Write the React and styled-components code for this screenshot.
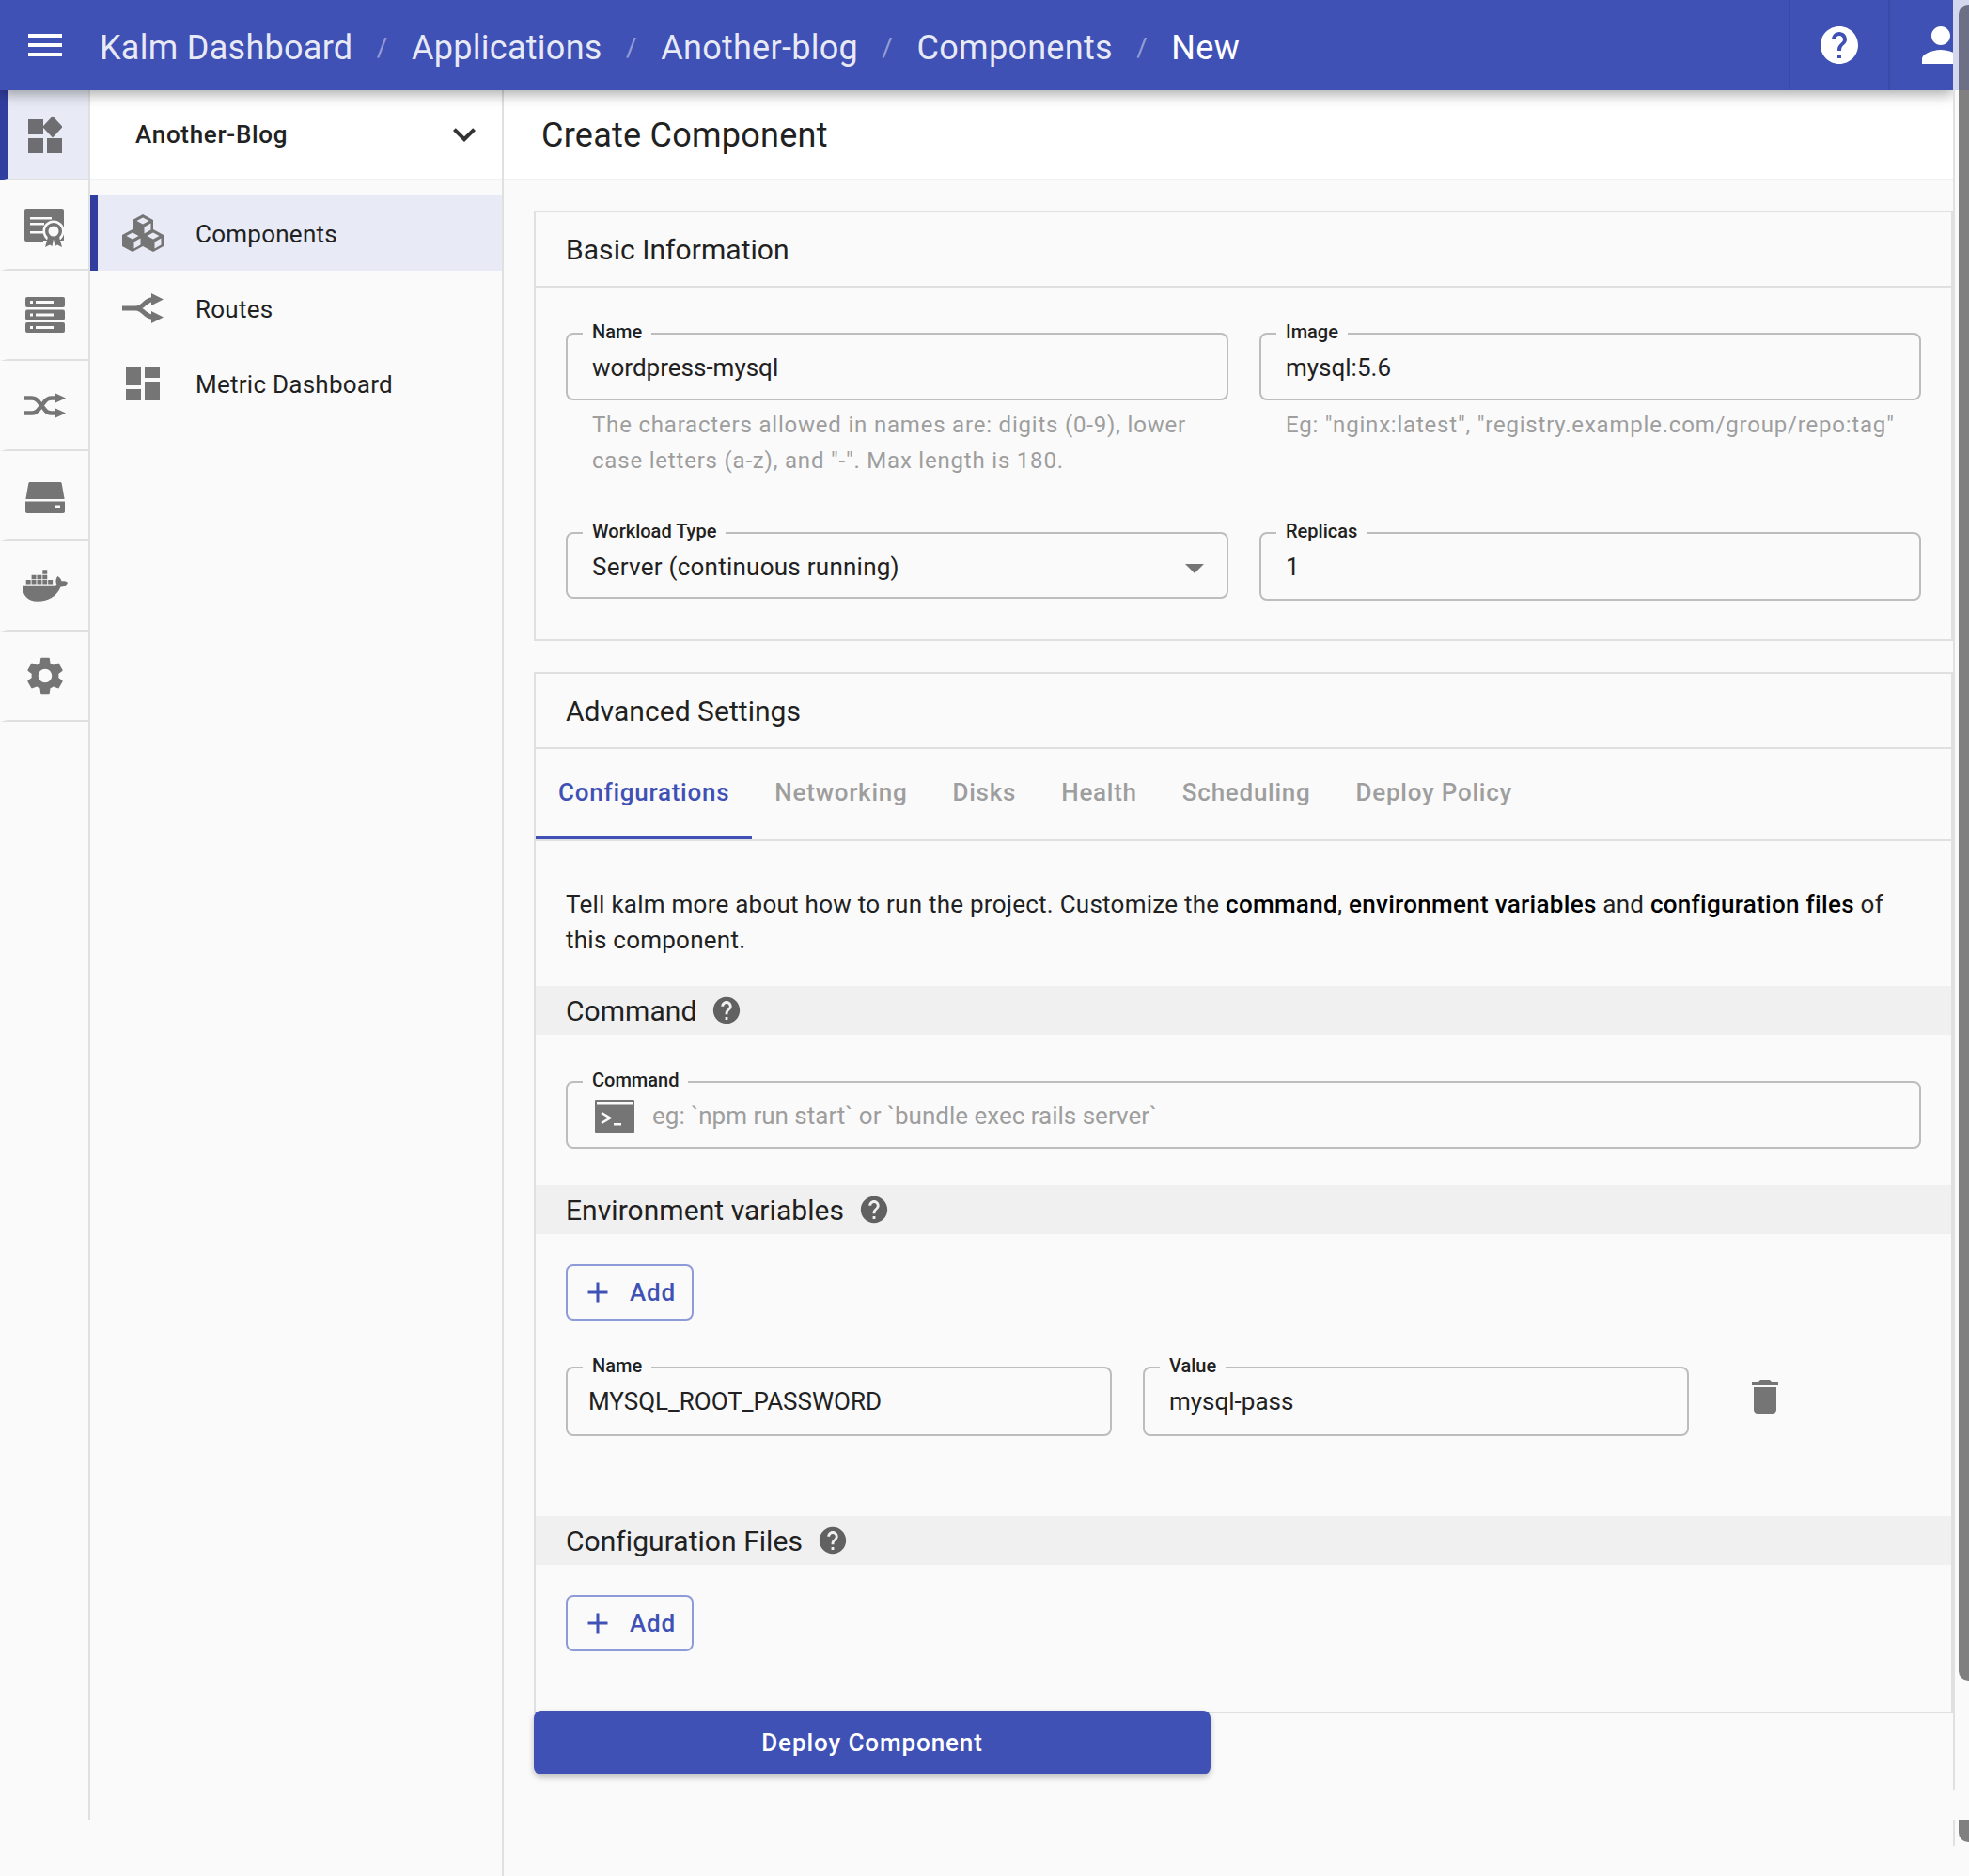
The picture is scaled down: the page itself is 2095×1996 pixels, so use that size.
import React from 'react';
import styled, { createGlobalStyle } from 'styled-components';
import { FaDocker } from 'react-icons/fa';
import { MdAdd, MdArrowDropDown, MdDashboard, MdDelete, MdHelp, MdKeyboardArrowDown, MdMenu, MdPerson, MdSettings } from 'react-icons/md';

const GlobalStyle = createGlobalStyle`
  html, body {
    margin: 0;
    background: #fafafa;
    overflow: hidden;
  }
  * {
    box-sizing: border-box;
  }
  body {
    font-family: Roboto, 'Liberation Sans', sans-serif;
    color: #212121;
  }
`;

const Page = styled.div`
  position: relative;
  width: 2095px;
  height: 1996px;
  padding-right: 17px;
  overflow: hidden;
`;

const TopBar = styled.header`
  position: relative;
  z-index: 2;
  display: flex;
  align-items: center;
  height: 96px;
  background: #4051b5;
  box-shadow: 0 4px 14px rgba(0, 0, 0, 0.35);
  overflow: hidden;
`;

const MenuSlot = styled.div`
  display: flex;
  align-items: center;
  justify-content: center;
  width: 96px;
  margin-right: 10px;
  color: #fff;
`;

const Crumbs = styled.nav`
  display: flex;
  align-items: center;
  flex: 1;
  padding-top: 5px;
  font-size: 36px;
  letter-spacing: 0.28px;
  color: rgba(255, 255, 255, 0.88);
`;

const Crumb = styled.span`
  color: ${({ $current }) => ($current ? '#fff' : 'inherit')};
`;

const CrumbSlash = styled.span`
  width: 62.5px;
  text-align: center;
  font-size: 28px;
  color: rgba(255, 255, 255, 0.45);
`;

const BarCell = styled.div`
  display: flex;
  align-items: center;
  justify-content: center;
  flex: none;
  width: 106px;
  height: 96px;
  border-left: 2px solid #3a4aa8;
  color: #fff;
`;

const PersonCell = styled(BarCell)`
  margin-right: -37px;
  padding-left: 4px;
`;

const Body = styled.div`
  display: flex;
  align-items: flex-start;
  height: 1900px;
`;

const Rail = styled.aside`
  flex: none;
  width: 96px;
  height: 1840px;
  border-right: 2px solid #e0e0e0;
`;

const RailItem = styled.div`
  display: flex;
  align-items: center;
  justify-content: center;
  height: 96px;
  padding-right: 6px;
  border-left: 8px solid ${({ $active }) => ($active ? '#303f9f' : 'transparent')};
  border-bottom: 2px solid #e0e0e0;
  background: ${({ $active }) => ($active ? '#e8eaf6' : 'transparent')};
  color: #757575;
`;

const SubNav = styled.aside`
  flex: none;
  width: 440px;
  height: 100%;
  border-right: 2px solid #e0e0e0;
`;

const SubNavHead = styled.div`
  display: flex;
  align-items: center;
  justify-content: space-between;
  height: 96px;
  padding: 0 16px 0 48px;
  background: #fff;
  border-bottom: 2px solid #f0f0f0;
  font-size: 26px;
  font-weight: 500;
  letter-spacing: 0.7px;
  color: #212121;
`;

const SubNavList = styled.div`
  padding-top: 16px;
`;

const SubNavItem = styled.div`
  display: flex;
  align-items: center;
  gap: 32px;
  height: 80px;
  padding-left: 24px;
  border-left: 8px solid ${({ $active }) => ($active ? '#303f9f' : 'transparent')};
  background: ${({ $active }) => ($active ? '#e8eaf6' : 'transparent')};
  font-size: 26px;
  letter-spacing: 0.25px;
`;

const SubNavIcon = styled.span`
  display: flex;
  align-items: center;
  justify-content: center;
  width: 48px;
  height: 48px;
  color: #757575;
`;

const SubNavLabel = styled.span`
  padding-top: 2px;
`;

const Main = styled.main`
  flex: 1;
  min-width: 0;
`;

const MainHead = styled.div`
  display: flex;
  align-items: center;
  height: 96px;
  padding: 2px 0 0 40px;
  background: #fff;
  border-bottom: 2px solid #f0f0f0;
  font-size: 36px;
  letter-spacing: 0.25px;
`;

const Content = styled.div`
  padding: 32px 0 0 32px;
`;

const Card = styled.section`
  margin-bottom: 33px;
  border: 2px solid #e0e0e0;
  background: #fafafa;
`;

const AdvancedCard = styled(Card)`
  margin-bottom: 0;
  padding-bottom: 64px;
`;

const CardHead = styled.div`
  display: flex;
  align-items: center;
  height: 80px;
  padding-left: 32px;
  border-bottom: 2px solid #e0e0e0;
  font-size: 30px;
  letter-spacing: 0.05px;
`;

const FieldGrid = styled.div`
  display: grid;
  grid-template-columns: 705px 704px;
  column-gap: 33px;
  row-gap: 46px;
  align-items: start;
  padding: 37px 32px 41px;
`;

const Field = styled.fieldset`
  display: block;
  height: ${({ $h }) => $h || 85}px;
  min-width: 0;
  margin: -2px 0 0;
  padding: 0;
  border: 2px solid #bdbdbd;
  border-radius: 8px;
`;

const FieldLabel = styled.legend`
  margin-left: 16px;
  padding: 0 10px 4px;
  font-size: 20px;
  font-weight: 500;
  line-height: 24px;
  color: #212121;
`;

const FieldBody = styled.div`
  display: flex;
  align-items: center;
  height: 50px;
  padding: 0 ${({ $right }) => $right || 26}px 5px ${({ $left }) => $left || 26}px;
`;

const FieldValue = styled.span`
  flex: 1;
  font-size: 26px;
  line-height: 43px;
  letter-spacing: ${({ $spaced }) => ($spaced ? '0.25px' : '0')};
  color: ${({ $placeholder }) => ($placeholder ? '#9e9e9e' : '#212121')};
`;

const HelperText = styled.p`
  margin: 8px 0 0;
  padding: 0 26px 0 28px;
  font-size: 24px;
  line-height: 37.5px;
  letter-spacing: 0.8px;
  color: #9e9e9e;
`;

const TabRow = styled.div`
  display: flex;
  height: 98px;
  border-bottom: 2px solid #e0e0e0;
`;

const Tab = styled.div`
  display: flex;
  align-items: center;
  height: 96px;
  padding: 0 24px;
  border-bottom: 4px solid ${({ $active }) => ($active ? '#4051b5' : 'transparent')};
  font-size: 26px;
  font-weight: 500;
  letter-spacing: 0.75px;
  color: ${({ $active }) => ($active ? '#4051b5' : '#9e9e9e')};
`;

const Intro = styled.p`
  margin: 0;
  padding: 48px 32px 30px;
  font-size: 26px;
  line-height: 38px;
  letter-spacing: 0.25px;
  color: #212121;

  strong {
    font-weight: 500;
    letter-spacing: 0.3px;
    color: #000;
  }
`;

const Band = styled.h3`
  display: flex;
  align-items: center;
  gap: 15px;
  height: 52px;
  margin: ${({ $top }) => $top || 0}px 0 0;
  padding-left: 32px;
  background: #f0f0f0;
  font-size: 30px;
  font-weight: 400;
  letter-spacing: 0.05px;
  color: #212121;
`;

const BandHelp = styled.span`
  display: flex;
  color: #616161;
`;

const FieldPad = styled.div`
  padding: 38px 32px 0;
`;

const CommandIcon = styled.span`
  display: flex;
  flex: none;
  margin-right: 19px;
`;

const AddButton = styled.button`
  display: flex;
  align-items: center;
  gap: 16px;
  width: 136px;
  height: 60px;
  padding: 0 0 0 14px;
  background: transparent;
  border: 2px solid #8f9bd8;
  border-radius: 8px;
  font-family: inherit;
  font-size: 26px;
  font-weight: 500;
  letter-spacing: 0.8px;
  color: #4051b5;
`;

const ButtonPad = styled.div`
  padding: 32px 32px 0;
`;

const EnvRow = styled.div`
  display: flex;
  align-items: flex-start;
  gap: 33px;
  padding: 38px 32px 0;
`;

const EnvField = styled.div`
  flex: none;
  width: 581px;
`;

const TrashSlot = styled.span`
  display: flex;
  margin: 19px 0 0 24px;
  color: #757575;
`;

const DeployButton = styled.button`
  position: relative;
  display: block;
  width: 720px;
  height: 68px;
  margin-top: -3px;
  background: #4051b5;
  border: 0;
  border-radius: 8px;
  box-shadow: 0 3px 6px rgba(0, 0, 0, 0.25);
  font-family: inherit;
  font-size: 26px;
  font-weight: 500;
  letter-spacing: 0.9px;
  color: #fff;
`;

const ScrollGutter = styled.div`
  position: absolute;
  z-index: 3;
  top: 0;
  right: 0;
  width: 17px;
  height: 100%;
  background: linear-gradient(#d3d7ee 96px, #fafafa 96px);
`;

const GutterLine = styled.div`
  position: absolute;
  top: ${({ $top }) => $top}px;
  left: 0;
  width: 2px;
  height: ${({ $h }) => $h}px;
  background: #e0e0e0;
`;

const ScrollThumb = styled.div`
  position: absolute;
  top: ${({ $top }) => $top}px;
  right: 0;
  width: 11px;
  height: ${({ $h }) => $h}px;
  border-radius: ${({ $flat }) => ($flat ? '0 0 0 10px' : '10px 0 0 10px')};
  background: linear-gradient(#6c6f85 ${({ $top }) => 96 - $top}px, #808080 ${({ $top }) => 96 - $top}px);
`;

const AppsIcon = () => (
  <svg width="36" height="40" viewBox="0 0 36 40" fill="#6e6e72">
    <rect x="0" y="4" width="16" height="16" />
    <rect x="0" y="24" width="16" height="16" />
    <rect x="20" y="24" width="16" height="16" />
    <path d="M27 .5L38 12 27 23.500 16 12z" transform="translate(-.5 0) scale(.98 1)" />
  </svg>
);

const CertIcon = () => (
  <svg width="44" height="50" viewBox="0 -8 44 50" fill="#757575">
    <rect x="0" y="0" width="42" height="35" rx="2" />
    <g fill="#fafafa">
      <rect x="6" y="9" width="23" height="2.500" />
      <rect x="6" y="15" width="15" height="2.500" />
      <rect x="6" y="24" width="14" height="2.500" />
      <circle cx="31" cy="24" r="11.500" />
      <path d="M20 34h22v8H20z" />
    </g>
    <path d="M25 30l-3 11 5-2.500 2.500 1.500 1.500-8zM37 30l3 11-5-2.500-2.500 1.500-1.500-8z" />
    <circle cx="31" cy="24" r="9" />
    <circle cx="31" cy="24" r="5.500" fill="#fafafa" />
  </svg>
);

const ServerIcon = () => (
  <svg width="42" height="42" viewBox="0 -2 42 42" fill="#757575">
    {[0, 13.5, 27].map((y) => (
      <g key={y}>
        <rect x="0" y={y} width="42" height="11" rx="2" />
        <rect x="5" y={y + 4} width="3" height="3" fill="#fafafa" />
        <rect x="11" y={y + 4} width="19" height="3" fill="#fafafa" />
      </g>
    ))}
  </svg>
);

const ShuffleIcon = () => (
  <svg width="44" height="27" viewBox="0 0 44 27" fill="none">
    <path d="M0 21.500h8c4 0 6-2 8-5l5-6.500c2-3 4-4.500 8-4.500h6M0 5.500h8c4 0 6 2 8 5l5 6.500c2 3 4 4.500 8 4.500h6" stroke="#757575" strokeWidth="4.500" />
    <path d="M32 0l12 5.500L32 11zM32 16l12 5.500L32 27z" fill="#757575" />
  </svg>
);

const DiskIcon = () => (
  <svg width="42" height="37" viewBox="0 -4 42 37" fill="#757575">
    <path d="M5 0h32c1 0 1.500.6 1.700 1.500L41.600 18H.4L3.300 1.500C3.500.6 4 0 5 0z" />
    <path d="M0 20.500h42V31c0 1-.8 2-2 2H2c-1.200 0-2-1-2-2z" />
    <rect x="32" y="24.500" width="5" height="3" fill="#fafafa" />
  </svg>
);

const cubeSpots = [
  [22, 13],
  [11, 29],
  [33, 29],
];

const CubesIcon = () => (
  <svg width="44" height="42" viewBox="0 0 44 42">
    {cubeSpots.map(([x, y]) => (
      <g key={x + y} transform={`translate(${x} ${y})`}>
        <path d="M0-12L11-6V6L0 12-11 6V-6z" fill="#757575" />
        <path d="M0-8.500L6.500-5 0-1.500-6.500-5z" fill="#e8eaf6" />
        <path d="M8.500-2.500V4.500L1.500 8.500V1.500z" fill="#e8eaf6" />
      </g>
    ))}
  </svg>
);

const RouteIcon = () => (
  <svg width="44" height="32" viewBox="0 0 44 32" fill="none">
    <path d="M0 16h14c5 0 8-3 11-6 3-2.500 5-3.500 9-3.500M14 16c5 0 8 3 11 6 3 2.500 5 3.500 9 3.500" stroke="#757575" strokeWidth="5" />
    <path d="M31 0l13 6.500L31 13zM31 19l13 6.500L31 32z" fill="#757575" />
  </svg>
);

const TerminalIcon = () => (
  <svg width="42" height="35" viewBox="0 0 42 35">
    <rect x="0" y="0" width="42" height="35" rx="1" fill="#757575" />
    <rect x="2" y="3" width="38" height="2.500" fill="#fafafa" />
    <path d="M7 14l9 5.500-9 5.500" fill="none" stroke="#fafafa" strokeWidth="2.600" />
    <rect x="20" y="25" width="8" height="2.500" fill="#fafafa" />
  </svg>
);

const railIcons = [
  <AppsIcon />,
  <CertIcon />,
  <ServerIcon />,
  <ShuffleIcon />,
  <DiskIcon />,
  <FaDocker size={48} />,
  <MdSettings size={48} />,
];

const crumbs = ['Kalm Dashboard', 'Applications', 'Another-blog', 'Components', 'New'];
const tabs = ['Configurations', 'Networking', 'Disks', 'Health', 'Scheduling', 'Deploy Policy'];

const SectionBand = ({ title, top }) => (
  <Band $top={top}>
    {title}
    <BandHelp>
      <MdHelp size={34} />
    </BandHelp>
  </Band>
);

const AddRow = () => (
  <ButtonPad>
    <AddButton type="button">
      <MdAdd size={36} />
      Add
    </AddButton>
  </ButtonPad>
);

export default function App() {
  return (
    <Page>
      <GlobalStyle />
      <TopBar>
        <MenuSlot>
          <MdMenu size={48} />
        </MenuSlot>
        <Crumbs>
          {crumbs.map((crumb, i) => (
            <React.Fragment key={crumb}>
              {i > 0 && <CrumbSlash>/</CrumbSlash>}
              <Crumb $current={i === crumbs.length - 1}>{crumb}</Crumb>
            </React.Fragment>
          ))}
        </Crumbs>
        <BarCell>
          <MdHelp size={48} />
        </BarCell>
        <PersonCell>
          <MdPerson size={60} />
        </PersonCell>
      </TopBar>

      <Body>
        <Rail>
          {railIcons.map((icon, i) => (
            <RailItem key={i} $active={i === 0}>
              {icon}
            </RailItem>
          ))}
        </Rail>

        <SubNav>
          <SubNavHead>
            Another-Blog
            <MdKeyboardArrowDown size={48} color="#333" />
          </SubNavHead>
          <SubNavList>
            <SubNavItem $active>
              <SubNavIcon>
                <CubesIcon />
              </SubNavIcon>
              <SubNavLabel>Components</SubNavLabel>
            </SubNavItem>
            <SubNavItem>
              <SubNavIcon>
                <RouteIcon />
              </SubNavIcon>
              <SubNavLabel>Routes</SubNavLabel>
            </SubNavItem>
            <SubNavItem>
              <SubNavIcon>
                <MdDashboard size={48} />
              </SubNavIcon>
              <SubNavLabel>Metric Dashboard</SubNavLabel>
            </SubNavItem>
          </SubNavList>
        </SubNav>

        <Main>
          <MainHead>Create Component</MainHead>
          <Content>
            <Card>
              <CardHead>Basic Information</CardHead>
              <FieldGrid>
                <div>
                  <Field>
                    <FieldLabel>Name</FieldLabel>
                    <FieldBody>
                      <FieldValue>wordpress-mysql</FieldValue>
                    </FieldBody>
                  </Field>
                  <HelperText>
                    The characters allowed in names are: digits (0-9), lower case letters (a-z), and "-". Max length is 180.
                  </HelperText>
                </div>
                <div>
                  <Field>
                    <FieldLabel>Image</FieldLabel>
                    <FieldBody>
                      <FieldValue>mysql:5.6</FieldValue>
                    </FieldBody>
                  </Field>
                  <HelperText>Eg: "nginx:latest", "registry.example.com/group/repo:tag"</HelperText>
                </div>
                <Field $h={84}>
                  <FieldLabel>Workload Type</FieldLabel>
                  <FieldBody $right={10}>
                    <FieldValue $spaced>Server (continuous running)</FieldValue>
                    <MdArrowDropDown size={48} color="#757575" />
                  </FieldBody>
                </Field>
                <Field $h={86}>
                  <FieldLabel>Replicas</FieldLabel>
                  <FieldBody>
                    <FieldValue>1</FieldValue>
                  </FieldBody>
                </Field>
              </FieldGrid>
            </Card>

            <AdvancedCard>
              <CardHead>Advanced Settings</CardHead>
              <TabRow>
                {tabs.map((tab, i) => (
                  <Tab key={tab} $active={i === 0}>
                    {tab}
                  </Tab>
                ))}
              </TabRow>
              <Intro>
                Tell kalm more about how to run the project. Customize the <strong>command</strong>,{' '}
                <strong>environment variables</strong> and <strong>configuration files</strong> of this component.
              </Intro>

              <SectionBand title="Command" />
              <FieldPad>
                <Field $h={85}>
                  <FieldLabel>Command</FieldLabel>
                  <FieldBody $left={29}>
                    <CommandIcon>
                      <TerminalIcon />
                    </CommandIcon>
                    <FieldValue $placeholder>eg: `npm run start` or `bundle exec rails server`</FieldValue>
                  </FieldBody>
                </Field>
              </FieldPad>

              <SectionBand title="Environment variables" top={39} />
              <AddRow />
              <EnvRow>
                <EnvField>
                  <Field $h={87}>
                    <FieldLabel>Name</FieldLabel>
                    <FieldBody $left={22}>
                      <FieldValue>MYSQL_ROOT_PASSWORD</FieldValue>
                    </FieldBody>
                  </Field>
                </EnvField>
                <EnvField>
                  <Field $h={87}>
                    <FieldLabel>Value</FieldLabel>
                    <FieldBody>
                      <FieldValue>mysql-pass</FieldValue>
                    </FieldBody>
                  </Field>
                </EnvField>
                <TrashSlot>
                  <MdDelete size={48} />
                </TrashSlot>
              </EnvRow>

              <SectionBand title="Configuration Files" top={85} />
              <AddRow />
            </AdvancedCard>
            <DeployButton type="button">Deploy Component</DeployButton>
          </Content>
        </Main>
      </Body>

      <ScrollGutter>
        <GutterLine $top={96} $h={1808} />
        <GutterLine $top={1936} $h={28} />
        <ScrollThumb $top={5} $h={1783} />
        <ScrollThumb $top={1936} $h={24} $flat />
      </ScrollGutter>
    </Page>
  );
}
